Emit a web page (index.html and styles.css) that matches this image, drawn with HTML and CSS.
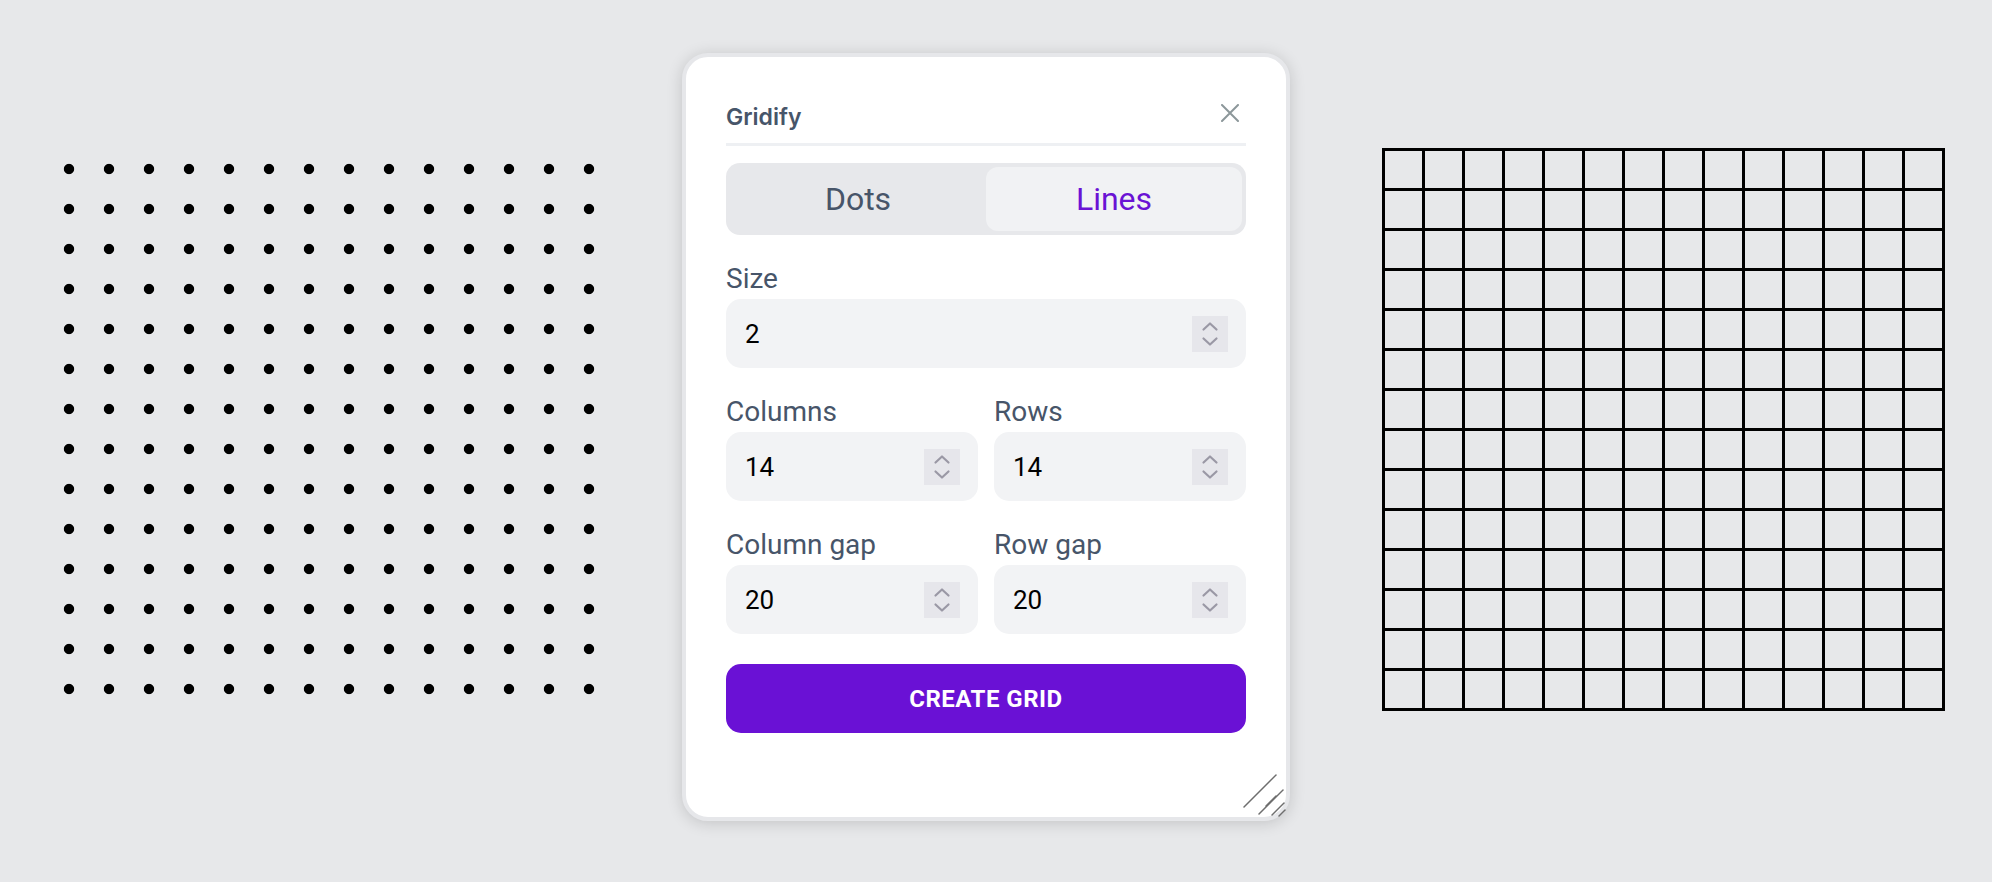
FILE: index.html
```html
<!DOCTYPE html>
<html lang="en">
<head>
<meta charset="utf-8">
<title>Gridify</title>
<link rel="stylesheet" href="styles.css">
</head>
<body>
<main class="stage">
  <div class="dots" aria-hidden="true"></div>

  <section class="panel">
    <header class="panel-head">
      <h1 class="title">Gridify</h1>
      <button class="close" type="button" aria-label="Close">
        <svg width="18" height="18" viewBox="0 0 18 18"><path d="M1 1L17 17M17 1L1 17" stroke="#8c979a" stroke-width="2" stroke-linecap="round" fill="none"/></svg>
      </button>
    </header>

    <div class="segmented">
      <button class="seg" type="button">Dots</button>
      <button class="seg seg-active" type="button">Lines</button>
    </div>

    <div class="fields">
      <label class="field">
        <span class="label">Size</span>
        <span class="box">
          <input class="num" type="text" value="2">
          <span class="spin"><svg width="36" height="36" viewBox="0 0 36 36"><path d="M11.5 13.5L18 7.5L24.5 13.5M11.5 22.5L18 28.5L24.5 22.5" stroke="#9a98a5" stroke-width="2.2" stroke-linecap="round" stroke-linejoin="round" fill="none"/></svg></span>
        </span>
      </label>

      <div class="row">
        <label class="field">
          <span class="label">Columns</span>
          <span class="box">
            <input class="num" type="text" value="14">
            <span class="spin"><svg width="36" height="36" viewBox="0 0 36 36"><path d="M11.5 13.5L18 7.5L24.5 13.5M11.5 22.5L18 28.5L24.5 22.5" stroke="#9a98a5" stroke-width="2.2" stroke-linecap="round" stroke-linejoin="round" fill="none"/></svg></span>
          </span>
        </label>
        <label class="field">
          <span class="label">Rows</span>
          <span class="box">
            <input class="num" type="text" value="14">
            <span class="spin"><svg width="36" height="36" viewBox="0 0 36 36"><path d="M11.5 13.5L18 7.5L24.5 13.5M11.5 22.5L18 28.5L24.5 22.5" stroke="#9a98a5" stroke-width="2.2" stroke-linecap="round" stroke-linejoin="round" fill="none"/></svg></span>
          </span>
        </label>
      </div>

      <div class="row">
        <label class="field">
          <span class="label">Column gap</span>
          <span class="box">
            <input class="num" type="text" value="20">
            <span class="spin"><svg width="36" height="36" viewBox="0 0 36 36"><path d="M11.5 13.5L18 7.5L24.5 13.5M11.5 22.5L18 28.5L24.5 22.5" stroke="#9a98a5" stroke-width="2.2" stroke-linecap="round" stroke-linejoin="round" fill="none"/></svg></span>
          </span>
        </label>
        <label class="field">
          <span class="label">Row gap</span>
          <span class="box">
            <input class="num" type="text" value="20">
            <span class="spin"><svg width="36" height="36" viewBox="0 0 36 36"><path d="M11.5 13.5L18 7.5L24.5 13.5M11.5 22.5L18 28.5L24.5 22.5" stroke="#9a98a5" stroke-width="2.2" stroke-linecap="round" stroke-linejoin="round" fill="none"/></svg></span>
          </span>
        </label>
      </div>

      <button class="create" type="button">CREATE GRID</button>
    </div>

    <svg class="grip" width="48" height="48" viewBox="0 0 48 48" aria-hidden="true">
      <g stroke="#6e6e6e" stroke-width="1.5" stroke-linecap="round">
        <line x1="6" y1="38" x2="38" y2="6"/>
        <line x1="21" y1="45" x2="45" y2="21"/>
        <line x1="28" y1="37" x2="38" y2="27"/>
        <line x1="34" y1="46" x2="46" y2="34"/>
        <line x1="41" y1="47" x2="47" y2="41"/>
      </g>
    </svg>
  </section>

  <div class="lines" aria-hidden="true"></div>
</main>
</body>
</html>
```

FILE: styles.css
```css
html, body {
  margin: 0;
  padding: 0;
}

body {
  background: #e7e8ea;
  width: 1992px;
  height: 882px;
  overflow: hidden;
  font-family: Roboto, "Liberation Sans", sans-serif;
}

.stage {
  display: flex;
  align-items: flex-start;
  padding: 53px 0 0 49px;
}

.dots {
  flex: none;
  width: 560px;
  height: 560px;
  margin-top: 96px;
  margin-right: 73px;
  background-image: radial-gradient(circle at center, #000 4.7px, rgba(0,0,0,0) 5.6px);
  background-size: 40px 40px;
}

.panel {
  flex: none;
  position: relative;
  box-sizing: border-box;
  width: 608px;
  margin-right: 92px;
  padding: 46px 40px 84px;
  background: #fff;
  border: 4px solid #e6e7ea;
  border-radius: 26px;
  box-shadow: 0 2px 16px rgba(0, 0, 0, 0.16);
}

.panel-head {
  display: flex;
  align-items: center;
  justify-content: space-between;
  height: 28px;
  padding-bottom: 12px;
  border-bottom: 3px solid #eef0f3;
}

.title {
  margin: 0;
  font-family: Inter, "Noto Sans", sans-serif;
  font-weight: 600;
  font-size: 23px;
  line-height: 28px;
  color: #475569;
}

.close {
  display: grid;
  place-items: center;
  width: 32px;
  height: 32px;
  margin-top: -8px;
  padding: 0;
  border: 0;
  background: transparent;
}

.segmented {
  display: grid;
  grid-template-columns: minmax(0, 1fr) minmax(0, 1fr);
  box-sizing: border-box;
  height: 72px;
  margin-top: 17px;
  padding: 4px;
  background: #e7e8eb;
  border-radius: 14px;
}

.seg {
  border: 0;
  padding: 0;
  background: transparent;
  border-radius: 12px;
  font-family: Roboto, sans-serif;
  font-size: 32px;
  font-weight: 400;
  color: #475569;
}

.seg-active {
  background: #f1f2f4;
  color: #6a12d4;
}

.fields {
  display: flex;
  flex-direction: column;
  gap: 26px;
  margin-top: 26px;
}

.row {
  display: grid;
  grid-template-columns: minmax(0, 1fr) minmax(0, 1fr);
  gap: 16px;
}

.field {
  display: flex;
  flex-direction: column;
  min-width: 0;
}

.label {
  font-size: 28px;
  line-height: 36px;
  color: #475569;
  margin-bottom: 2px;
}

.box {
  display: flex;
  align-items: center;
  box-sizing: border-box;
  height: 69px;
  padding: 0 18px 0 19px;
  background: #f2f3f5;
  border-radius: 15px;
}

.num {
  flex: 1 1 0;
  width: 0;
  min-width: 0;
  border: 0;
  padding: 0;
  outline: none;
  background: transparent;
  font-family: Roboto, sans-serif;
  font-size: 26px;
  color: #000;
}

.spin {
  flex: none;
  display: block;
  width: 36px;
  height: 36px;
  background: #e6e6eb;
}

.spin svg {
  display: block;
}

.create {
  height: 69px;
  margin-top: 4px;
  border: 0;
  border-radius: 15px;
  background: #6a11d5;
  color: #fff;
  font-family: Roboto, sans-serif;
  font-size: 24px;
  font-weight: 700;
  letter-spacing: 0.5px;
}

.grip {
  position: absolute;
  right: 0;
  bottom: 0;
}

.lines {
  flex: none;
  width: 563.4px;
  height: 563.4px;
  margin-top: 95px;
  background-image:
    linear-gradient(to right, #000 3.4px, rgba(0,0,0,0) 3.4px),
    linear-gradient(to bottom, #000 3.4px, rgba(0,0,0,0) 3.4px);
  background-size: 40px 40px;
}
```
